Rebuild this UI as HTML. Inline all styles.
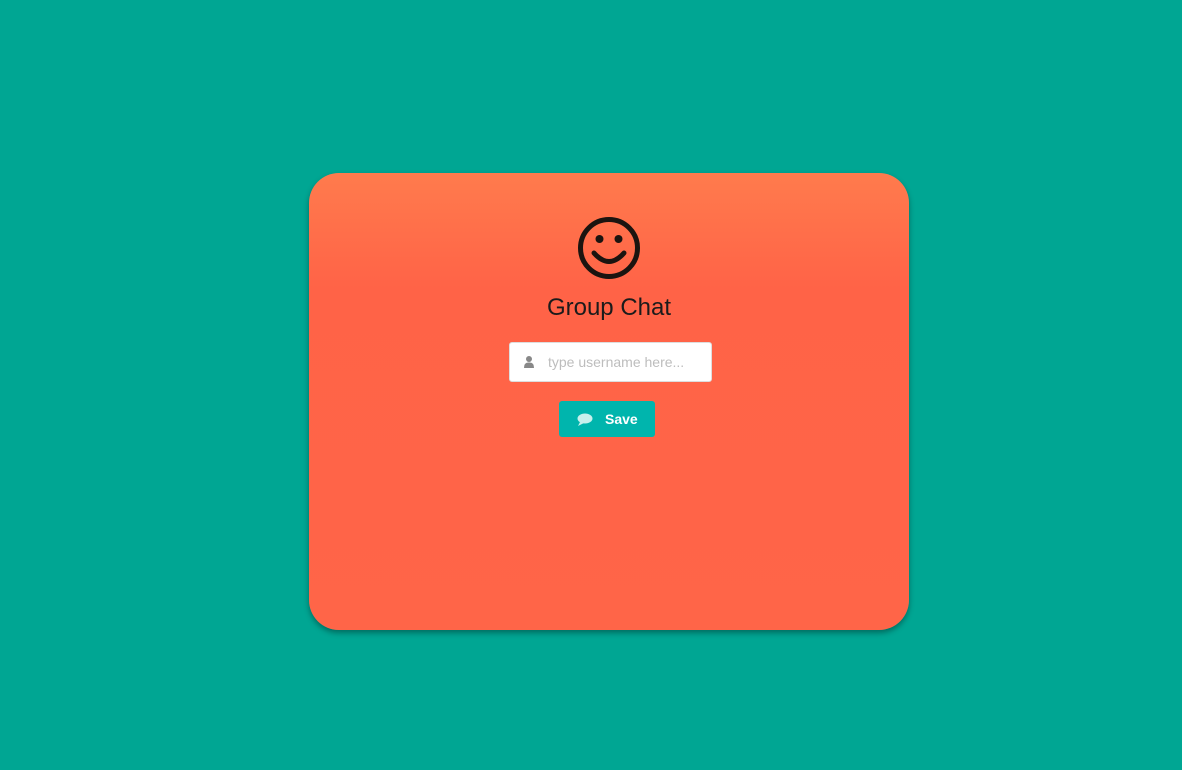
<!DOCTYPE html>
<html><head><style>
body{margin:0;width:1182px;height:770px;background:#00a693;font-family:"Liberation Sans",sans-serif;position:relative;overflow:hidden}
.card{position:absolute;left:309px;top:173px;width:600px;height:457px;border-radius:30px;background:linear-gradient(#ff7b4d 0px,#ff6347 115px,#ff6548 100%);box-shadow:0 3px 6px rgba(0,0,0,.35)}
.title{position:absolute;left:0;width:600px;top:121px;text-align:center;font-size:24px;color:#1b1b1b}
.inp{position:absolute;left:200px;top:169px;width:201px;height:38px;background:#fff;border:1px solid #ddd;border-radius:3px}
.ph{position:absolute;left:38px;top:11px;font-size:14px;color:#bdbdbd}
.btn{position:absolute;left:250px;top:228px;width:96px;height:36px;background:#00b5ad;border-radius:3px;color:#fff;font-weight:bold;font-size:14px}
</style></head><body>
<div class="card">
<svg style="position:absolute;left:268px;top:44px" width="64" height="64" viewBox="0 0 64 64"><circle cx="32" cy="31" r="28.5" fill="none" stroke="#1b1410" stroke-width="5"/><circle cx="22.5" cy="22" r="4" fill="#1b1410"/><circle cx="41.5" cy="22" r="4" fill="#1b1410"/><path d="M17 36 Q32 53 47 36" fill="none" stroke="#1b1410" stroke-width="5" stroke-linecap="round"/></svg>
<div class="title">Group Chat</div>
<div class="inp"><svg style="position:absolute;left:14px;top:13px" width="10" height="12" viewBox="0 0 10 12"><circle cx="5" cy="3" r="3" fill="#888"/><path d="M0 12 Q0 6 5 6.5 Q10 6 10 12Z" fill="#888"/></svg><span class="ph">type username here...</span></div>
<div class="btn"><svg style="position:absolute;left:18px;top:12px" width="16" height="13" viewBox="0 0 16 13"><ellipse cx="8" cy="5.5" rx="7.5" ry="5" fill="#c8f0ec"/><path d="M3 9 L1 13 L7 10Z" fill="#c8f0ec"/></svg><span style="position:absolute;left:46px;top:10px">Save</span></div>
</div>
</body></html>
